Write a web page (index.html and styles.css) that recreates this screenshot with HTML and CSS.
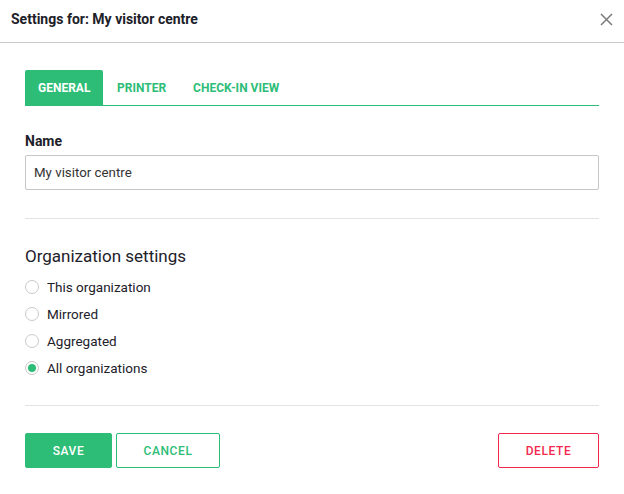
FILE: index.html
```html
<!DOCTYPE html>
<html>
<head>
<meta charset="utf-8">
<link rel="stylesheet" href="styles.css">
</head>
<body>
<div class="dialog">
  <div class="header">
    <div class="title">Settings for: My visitor centre</div>
    <button class="close" aria-label="Close">
      <svg width="13" height="13" viewBox="0 0 13 13"><path d="M1 1L12 12M12 1L1 12" stroke="#7a7a7a" stroke-width="1.5" fill="none"/></svg>
    </button>
  </div>
  <div class="content">
    <div class="tabs">
      <div class="tab active">GENERAL</div>
      <div class="tab">PRINTER</div>
      <div class="tab">CHECK-IN VIEW</div>
    </div>
    <label class="label">Name</label>
    <div class="input">My visitor centre</div>
    <div class="divider first"></div>
    <div class="section-title">Organization settings</div>
    <div class="radios">
      <div class="radio-row"><span class="radio"></span><span>This organization</span></div>
      <div class="radio-row"><span class="radio"></span><span>Mirrored</span></div>
      <div class="radio-row"><span class="radio"></span><span>Aggregated</span></div>
      <div class="radio-row"><span class="radio checked"></span><span>All organizations</span></div>
    </div>
    <div class="divider second"></div>
    <div class="actions">
      <button class="btn primary">SAVE</button>
      <button class="btn outline">CANCEL</button>
      <span class="spacer"></span>
      <button class="btn danger">DELETE</button>
    </div>
  </div>
</div>
</body>
</html>
```
FILE: styles.css
```css
* { box-sizing: border-box; }
html, body { margin: 0; padding: 0; background: #fff; }
body { font-family: Roboto, "Noto Sans", sans-serif; color: #1d2129; }
.dialog { width: 624px; }
.header {
  height: 43px;
  border-bottom: 1px solid #c9c9c9;
  display: flex;
  align-items: center;
  justify-content: space-between;
  padding: 0 11px 0 11px;
}
.title { font-size: 14px; font-weight: 700; color: #1d2129; margin-top: -4px; }
.close { border: 0; background: none; padding: 0; width: 13px; height: 13px; display: flex; margin-top: -4px; cursor: pointer; }
.content { padding: 27px 25px 0 25px; }
.tabs { display: flex; border-bottom: 1px solid #2dbd77; height: 36px; }
.tab {
  height: 35px;
  display: flex;
  align-items: center;
  padding: 0 13px 0 14px;
  font-size: 12px;
  font-weight: 700;
  color: #2dbd77;
  border-radius: 2px 2px 0 0;
}
.tab.active { background: #2dbd77; color: #fff; padding: 0 14px 0 13px; width: 78px; }
.label { display: block; margin-top: 27px; font-size: 14px; font-weight: 700; line-height: 17px; color: #1d2129; }
.input {
  margin-top: 5px;
  height: 35px;
  border: 1px solid #c6c6c6;
  border-radius: 2px;
  padding: 0 8px;
  display: flex;
  align-items: center;
  font-size: 13.3px;
  color: #333;
}
.divider { height: 1px; background: #e4e4e4; }
.divider.first { margin-top: 28px; }
.section-title { margin-top: 27px; font-size: 17px; line-height: 20px; color: #1d2129; }
.radios { margin-top: 7px; }
.radio-row { height: 27px; display: flex; align-items: center; gap: 8px; font-size: 13.5px; color: #1d2129; }
.radio {
  width: 14px; height: 14px; border-radius: 50%;
  border: 1px solid #c9c9c9; background: #fff;
  display: flex; align-items: center; justify-content: center;
}
.radio.checked::after { content: ""; width: 8px; height: 8px; border-radius: 50%; background: #2dbd77; }
.divider.second { margin-top: 24px; }
.actions { display: flex; margin-top: 27px; gap: 4px; }
.spacer { flex: 1; }
.btn {
  height: 35px;
  font-family: Roboto, "Noto Sans", sans-serif;
  font-size: 12px;
  font-weight: 500;
  letter-spacing: 0.6px;
  border-radius: 2px;
  cursor: pointer;
  padding: 0;
}
.btn.primary { width: 87px; background: #2dbd77; border: 1px solid #2dbd77; color: #fff; }
.btn.outline { width: 104px; background: #fff; border: 1px solid #2dbd77; color: #2dbd77; }
.btn.danger { width: 101px; background: #fff; border: 1px solid #f2284e; color: #f2284e; }
```
